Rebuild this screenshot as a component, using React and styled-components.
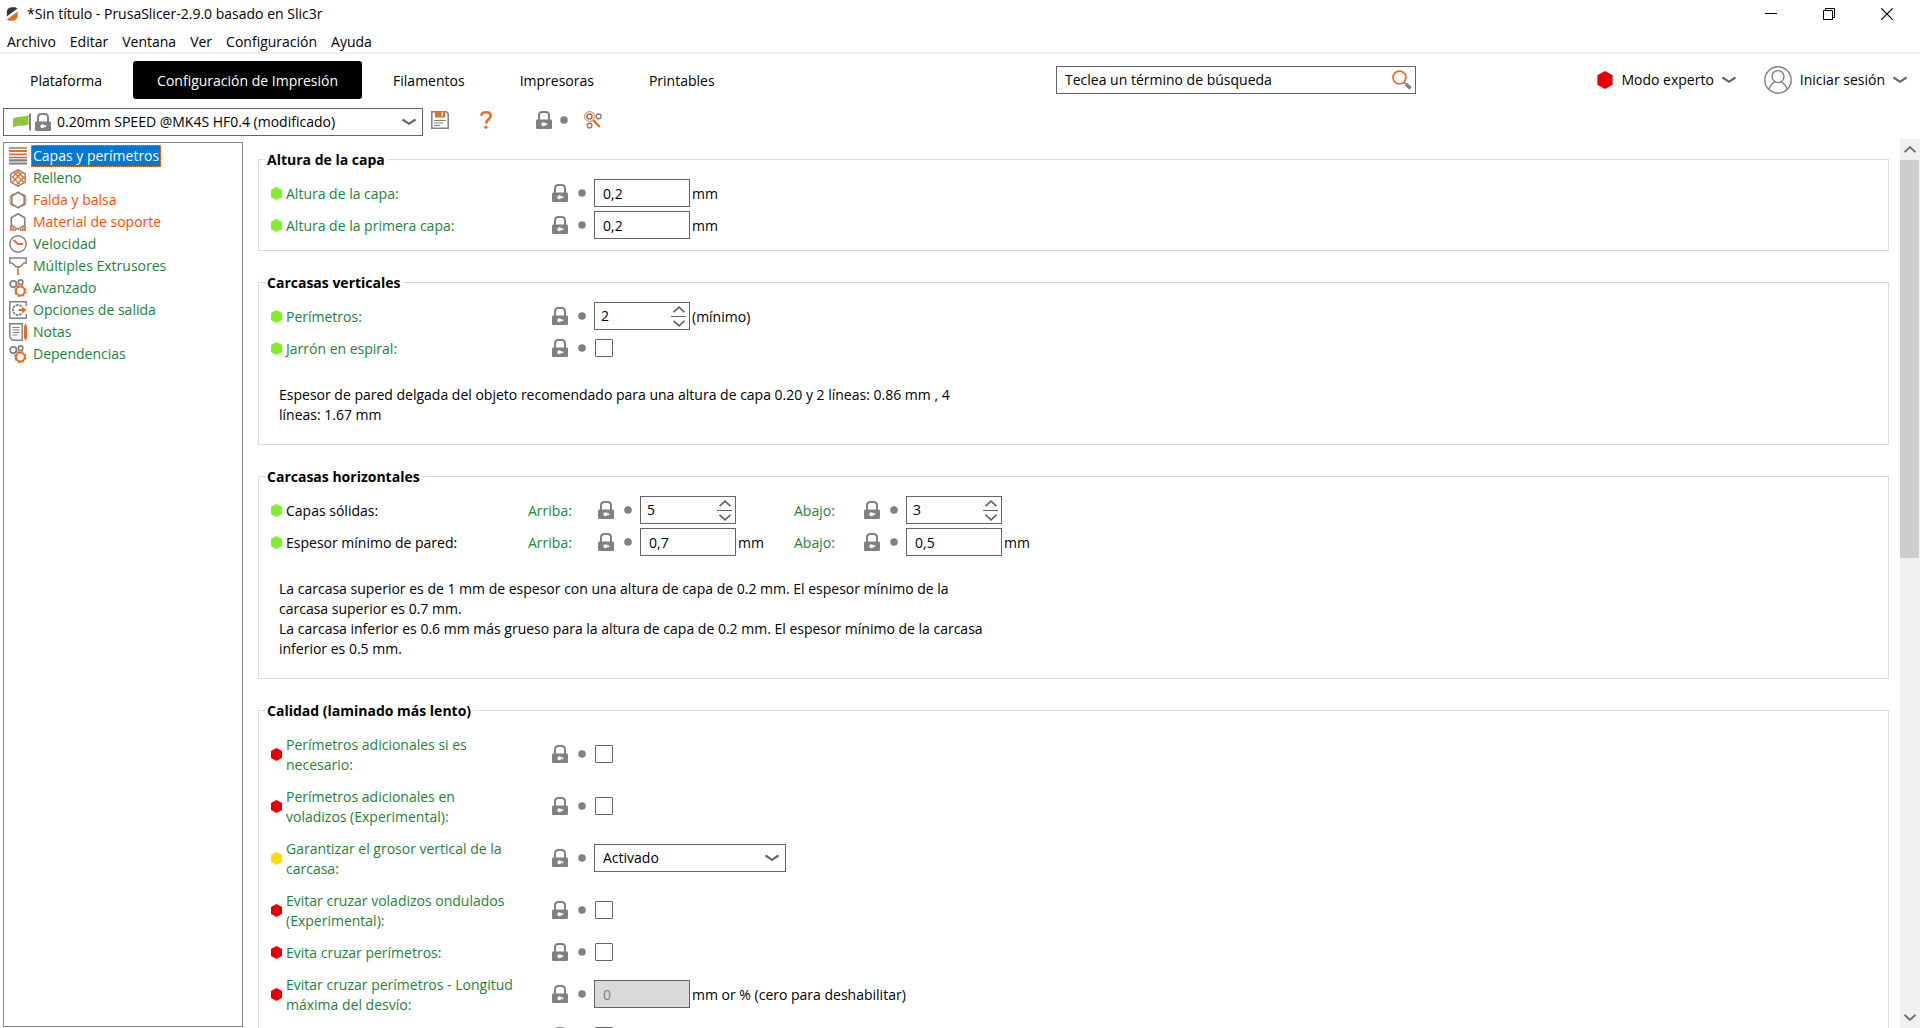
import React, { useId } from "react";
import styled, { createGlobalStyle, css } from "styled-components";

const c = {
  text: "#000000",
  green: "#1a8439",
  orange: "#fc4d01",
  accent: "#ed6b21",
  grey: "#808080",
  border: "#646464",
  group: "#dcdcdc",
  simple: "#7df028",
  advanced: "#ffdc00",
  expert: "#e70000",
};

const GlobalStyle = createGlobalStyle`
  *, *::before, *::after { box-sizing: border-box; }
  body {
    margin: 0;
    background: #ffffff;
    color: ${c.text};
    font: 14px/20px "Open Sans", "Noto Sans", sans-serif;
  }
  button, input, select { font: inherit; color: inherit; margin: 0; }
  svg { display: block; flex: none; }
`;

/* ---------- icons ---------- */

const Svg = ({ w, h, children, ...rest }) => (
  <svg width={w} height={h} viewBox={`0 0 ${w} ${h}`} fill="none" aria-hidden="true" {...rest}>
    {children}
  </svg>
);

const LockIcon = () => (
  <Svg w={16} h={18}>
    <path d="M3 9V4.5Q3 1 6.5 1h3Q13 1 13 4.5V9" stroke={c.grey} strokeWidth="2" />
    <rect y="8.5" width="16" height="9.5" rx="1.2" fill={c.grey} />
    <circle cx="7.4" cy="13.2" r="2" fill="#fff" />
    <path d="M8 13.2h3.2" stroke="#fff" strokeWidth="1.8" />
  </Svg>
);

const DotIcon = () => (
  <Svg w={8} h={8}>
    <circle cx="4" cy="4" r="3.8" fill={c.grey} />
  </Svg>
);

const HexIcon = ({ color, w = 11, h = 13 }) => (
  <svg width={w} height={h} viewBox="0 0 11 13" aria-hidden="true">
    <path d="M5.5 0 11 3v7l-5.5 3L0 10V3z" fill={color} />
  </svg>
);

const ChevronDown = ({ w = 14, h = 8 }) => (
  <svg width={w} height={h} viewBox="0 0 14 8" fill="none" aria-hidden="true">
    <path d="M.5 1.500 7 5.800l6.500-4.300" stroke={c.border} strokeWidth="2.200" />
  </svg>
);

const ArrowTip = ({ up }) => (
  <Svg w={12} h={7}>
    <path d={up ? "M.5 6.2 6 1.2l5.500 5" : "M.5.800l5.500 5 5.500-5"} stroke={c.border} strokeWidth="1.8" />
  </Svg>
);

const LogoIcon = () => (
  <Svg w={12} h={14}>
    <path d="M.8 9.500V5Q1.200.3 6 .3h3.500L11.500 1.500z" fill="#363636" />
    <path d="M11.600 4.500V9Q11 13.700 6.200 13.700H3L.8 12.500z" fill={c.accent} />
  </Svg>
);

const FlagIcon = () => (
  <Svg w={18} h={18}>
    <path d="M0 5.500Q4 3.600 8 3.800T15.500 2V11.500Q12 12.800 8 12.600T0 14.500z" fill="#8cc63f" />
    <path d="M17 .5v17" stroke={c.grey} strokeWidth="2" />
  </Svg>
);

const SaveIcon = () => (
  <Svg w={18} h={18}>
    <path d="M.8.800h14.400l2 2v14.400H.8z" stroke={c.grey} strokeWidth="1.500" />
    <path d="M4 0h10v6.500H4z" fill={c.accent} />
    <path d="M11.200 1.200v3.800" stroke="#fff" strokeWidth="1.500" />
    <path d="M3 9.500h12M3 12h9M3 14.500h6" stroke={c.grey} strokeWidth="1.200" />
  </Svg>
);

const HelpIcon = () => (
  <Svg w={12} h={18}>
    <path d="M1.300 4.800Q1.300 1.300 6 1.300T10.700 5c0 3-4.600 3.600-4.600 7.500" stroke={c.accent} strokeWidth="2.600" />
    <circle cx="6" cy="16.200" r="1.600" fill={c.accent} />
  </Svg>
);

const CompareIcon = () => (
  <Svg w={18} h={18}>
    <circle cx="5.500" cy="5.500" r="4.900" stroke={c.accent} strokeWidth="1" />
    <circle cx="5.500" cy="5.500" r="2.500" stroke={c.grey} strokeWidth="1.600" />
    <circle cx="14.600" cy="5.400" r="2.400" stroke={c.grey} strokeWidth="1.400" />
    <circle cx="5.500" cy="14.600" r="2.400" stroke={c.grey} strokeWidth="1.400" />
    <path d="m9.200 9.200 6.600 6.800" stroke={c.accent} strokeWidth="2.400" />
  </Svg>
);

const SearchIcon = () => (
  <Svg w={20} h={20}>
    <circle cx="7.500" cy="7.500" r="6.400" stroke={c.accent} strokeWidth="1.800" />
    <path d="m12.500 12.500 1.500 1.500" stroke={c.grey} strokeWidth="1.500" />
    <path d="m14 14 4.500 4.500" stroke={c.grey} strokeWidth="3.400" />
  </Svg>
);

const UserIcon = () => (
  <Svg w={28} h={28} stroke={c.grey} strokeWidth="1.400">
    <circle cx="14" cy="14" r="13.200" />
    <circle cx="14" cy="10.600" r="6" />
    <path d="M4.800 23.200Q7 17.500 11 15.800M23.200 23.200Q21 17.500 17 15.800" />
  </Svg>
);

const LayersIcon = () => (
  <Svg w={18} h={18}>
    <path d="M0 1h18M0 10.500h18" stroke={c.grey} strokeWidth="1.300" />
    <path d="M0 4h18M0 7.300h18" stroke={c.accent} strokeWidth="1.800" />
    <path d="M0 13.300h18M0 16.500h18" stroke={c.grey} strokeWidth="2.200" />
  </Svg>
);

const InfillIcon = () => (
  <Svg w={18} h={18}>
    <path d="M5 3.500 14.500 13M3 7.500l7.500 7.500M8.500 2.500 15.500 9.500M13 3.500 3.500 13M15.500 7.500 8 15.500M9.500 2 3 8.500" stroke={c.accent} strokeWidth="1.300" />
    <path d="M9 .8 16.200 5v8L9 17.200 1.800 13V5z" stroke={c.grey} strokeWidth="1.400" />
  </Svg>
);

const SkirtIcon = () => (
  <Svg w={18} h={18}>
    <path d="M5 2.800 1.500 5v8L5 15.200M13 2.800 16.500 5v8L13 15.200" stroke="#f3a67a" strokeWidth="2" />
    <path d="M9 1.200 15.200 5v8L9 16.800 2.800 13V5z" stroke={c.grey} strokeWidth="1.600" />
  </Svg>
);

const SupportIcon = () => (
  <Svg w={18} h={18}>
    <path d="M2 12.500V18M4.200 14.500V18M6.400 16v2M16 12.500V18M13.800 14.500V18M11.600 16v2" stroke={c.accent} strokeWidth="1.700" />
    <path d="M9 .8 15.700 4.800v7.600L9 16.200 2.300 12.400V4.800z" stroke={c.grey} strokeWidth="1.600" />
  </Svg>
);

const SpeedIcon = () => (
  <Svg w={18} h={18}>
    <circle cx="9" cy="9" r="8.200" stroke={c.grey} strokeWidth="1.400" />
    <path d="M4.500 5 9 9h5" stroke={c.accent} strokeWidth="1.800" />
  </Svg>
);

const ExtruderIcon = () => (
  <Svg w={18} h={18}>
    <path d="M.8 1h16.400v5H15L11 9.800H7L3 6H.8z" stroke={c.grey} strokeWidth="1.400" />
    <path d="M9 10v8" stroke={c.accent} strokeWidth="1.600" />
  </Svg>
);

const GearsIcon = () => (
  <Svg w={18} h={18}>
    <circle cx="4.300" cy="5" r="3.200" stroke={c.grey} strokeWidth="1.800" />
    <circle cx="11.600" cy="3.200" r="2.300" stroke={c.grey} strokeWidth="1.600" />
    <circle cx="11.300" cy="12" r="4.400" stroke={c.accent} strokeWidth="2" />
    <circle cx="11.300" cy="12" r="5.500" stroke={c.accent} strokeWidth="1.200" strokeDasharray="2.400 1.920" />
  </Svg>
);

const OutputIcon = () => (
  <Svg w={18} h={18}>
    <path d="M17.200 5V.8H.8v16.400h16.400V13" stroke={c.grey} strokeWidth="1.400" />
    <path d="M12.500 5.500A5 5 0 1 0 12.500 12.500" stroke={c.grey} strokeWidth="1.800" strokeDasharray="2.600 .8" />
    <path d="M9.500 9H14" stroke={c.accent} strokeWidth="2" />
    <path d="M13 5.500 17.500 9 13 12.500z" fill={c.accent} />
  </Svg>
);

const NotesIcon = () => (
  <Svg w={18} h={18}>
    <path d="M.8.800h12.400v16.400H3.500L.8 14.500z" stroke={c.grey} strokeWidth="1.400" />
    <path d="M3.500 4.500h7M3.500 7h7M3.500 9.500h7M3.500 12h4.500" stroke={c.grey} strokeWidth="1.200" />
    <path d="M15 3.500 16.500 0 18 3.500V15l-1.500 3L15 15z" fill={c.accent} />
  </Svg>
);

/* ---------- window frame ---------- */

const Window = styled.div`
  height: 100vh;
  display: flex;
  flex-direction: column;
  overflow: hidden;
`;

const TitleBar = styled.header`
  display: flex;
  align-items: center;
  gap: 9px;
  height: 28px;
  padding-left: 6px;
`;

const TitleText = styled.h1`
  margin: 0;
  flex: 1;
  font-size: 14px;
  font-weight: 400;
`;

const WindowButton = styled.button`
  display: grid;
  place-items: center;
  width: 58px;
  height: 28px;
  padding: 0;
  border: 0;
  background: none;
`;

const WindowButtons = styled.div`
  display: flex;
  padding-right: 4px;
`;

const MenuBar = styled.nav`
  display: flex;
  gap: 14px;
  height: 26px;
  padding: 4px 7px 0;
  border-bottom: 2px solid #f0f0f0;
`;

const MenuItem = styled.button`
  height: 20px;
  padding: 0;
  border: 0;
  background: none;
`;

const TopBar = styled.div`
  display: flex;
  align-items: center;
  padding: 7px 13px 0 6px;
`;

const Tabs = styled.div`
  display: flex;
  flex: 1;
  gap: 7px;
`;

const Tab = styled.button`
  height: 38px;
  padding: 1px 24px 0;
  border: 0;
  border-radius: 3px;
  white-space: nowrap;
  background: ${(p) => (p.$active ? "#000000" : "transparent")};
  color: ${(p) => (p.$active ? "#ffffff" : c.text)};
`;

const SearchBox = styled.label`
  display: flex;
  align-items: center;
  width: 360px;
  height: 28px;
  padding: 0 3px 0 8px;
  border: 1px solid ${c.border};
`;

const SearchInput = styled.input`
  flex: 1;
  min-width: 0;
  padding: 0;
  border: 0;
  outline: 0;
  background: none;
  &::placeholder {
    color: ${c.text};
    opacity: 1;
  }
`;

const AccountArea = styled.div`
  display: flex;
  justify-content: flex-end;
  gap: 28px;
  width: 491px;
`;

const MenuButton = styled.button`
  display: flex;
  align-items: center;
  gap: 8px;
  height: 28px;
  padding: 0;
  border: 0;
  background: none;
`;

/* ---------- toolbar ---------- */

const Toolbar = styled.div`
  display: flex;
  align-items: flex-end;
  height: 40px;
  padding: 0 0 3px 3px;
`;

const selectReset = css`
  appearance: none;
  border: 0;
  outline: 0;
  background: none;
  color: ${c.text};
`;

const PresetBox = styled.div`
  display: flex;
  align-items: center;
  gap: 4px;
  width: 420px;
  height: 28px;
  padding: 0 6px 0 9px;
  border: 1px solid ${c.border};
`;

const PresetSelect = styled.select`
  ${selectReset}
  flex: 1;
  min-width: 0;
  padding: 0 2px;
`;

const ToolGroup = styled.div`
  display: flex;
  align-items: center;
  height: 32px;
  padding-left: ${(p) => p.$before}px;
  gap: ${(p) => p.$gap}px;
`;

const IconButton = styled.button`
  display: grid;
  place-items: center;
  padding: 0;
  border: 0;
  background: none;
`;

/* ---------- main area ---------- */

const Main = styled.main`
  flex: 1;
  min-height: 0;
  display: flex;
`;

const Tree = styled.ul`
  width: 240px;
  margin: 3px 15px 1px 3px;
  padding: 2px 5px;
  list-style: none;
  border: 1px solid #828790;
`;

const TreeItem = styled.button`
  display: flex;
  align-items: center;
  gap: 4px;
  height: 22px;
  padding: 0;
  border: 0;
  background: none;
  color: ${(p) => (p.$modified ? c.orange : c.green)};
`;

const TreeLabel = styled.span`
  padding: 0 1px;
  border: 1px solid transparent;
  line-height: 20px;
  ${(p) =>
    p.$selected &&
    css`
      background: #0078d7;
      border: 1px dotted #ff8728;
      color: #ffffff;
    `}
`;

const Pane = styled.div`
  flex: 1;
  min-width: 0;
  display: flex;
  flex-direction: column;
  gap: 21px;
  padding: 10px 11px 0 0;
  overflow: auto;
  scrollbar-width: none;
`;

const Group = styled.fieldset`
  flex: none;
  min-width: 0;
  margin: 0;
  padding: 9px 12px 11px;
  border: 1px solid ${c.group};
`;

const GroupTitle = styled.legend`
  margin-left: -6px;
  padding: 0 2px;
  font-weight: 700;
  line-height: 21px;
`;

const Rows = styled.div`
  display: flex;
  flex-direction: column;
  gap: 4px;
`;

const Row = styled.div`
  display: flex;
  align-items: center;
  min-height: ${(p) => (p.$tall ? 48 : 28)}px;
`;

const OptionLabel = styled.label`
  display: flex;
  align-items: center;
  gap: 4px;
  width: ${(p) => (p.$short ? 257 : 281)}px;
  padding-right: ${(p) => (p.$short ? 0 : 36)}px;
  color: ${(p) => (p.$plain ? c.text : c.green)};
`;

const LabelText = styled.span`
  padding-top: 2px;
`;

const Cell = styled.div`
  display: flex;
  align-items: center;
  width: 266px;
`;

const CellLabel = styled.label`
  width: 70px;
  padding-top: 2px;
  color: ${c.green};
`;

const Marks = styled.span`
  display: flex;
  align-items: center;
  gap: 10px;
  margin-right: 8px;
`;

const TextInput = styled.input`
  width: 96px;
  height: 28px;
  padding: 0 8px;
  border: 1px solid ${c.border};
  border-radius: 0;
  outline: 0;
  background: #ffffff;
  &:disabled {
    background: #d9d9d9;
    color: ${c.grey};
  }
`;

const SpinBox = styled.span`
  display: flex;
  width: 96px;
  height: 28px;
  padding: 0 3px 0 6px;
  border: 1px solid ${c.border};
`;

const SpinInput = styled.input`
  flex: 1;
  min-width: 0;
  padding: 0;
  border: 0;
  outline: 0;
  appearance: textfield;
  &::-webkit-inner-spin-button {
    display: none;
  }
`;

const SpinButtons = styled.span`
  display: flex;
  flex-direction: column;
  justify-content: center;
`;

const SpinButton = styled.button`
  display: grid;
  place-items: center;
  width: 15px;
  height: 13px;
  padding: 0;
  border: 0;
  background: none;
  & + & {
    border-top: 1px solid ${c.border};
  }
`;

const Check = styled.input`
  appearance: none;
  width: 18px;
  height: 18px;
  margin-left: 1px;
  border: 1px solid ${c.border};
  border-radius: 1px;
  background: #ffffff;
  &:checked {
    background: ${c.accent};
  }
`;

const SelectBox = styled.span`
  display: flex;
  align-items: center;
  width: 192px;
  height: 28px;
  padding: 0 6px 0 8px;
  border: 1px solid ${c.border};
`;

const SelectInput = styled.select`
  ${selectReset}
  flex: 1;
  min-width: 0;
  padding: 0;
`;

const Suffix = styled.span`
  padding: 2px 0 0 2px;
`;

const Note = styled.p`
  max-width: 716px;
  margin: 23px 0 8px;
  padding-left: 8px;
`;

const ScrollBar = styled.div`
  display: flex;
  flex-direction: column;
  width: 20px;
  background: #f0f0f0;
`;

const ScrollButton = styled.button`
  display: grid;
  place-items: center;
  width: 19px;
  height: 21px;
  padding: 0;
  border: 0;
  background: none;
`;

const ScrollTrack = styled.div`
  flex: 1;
`;

const ScrollThumb = styled.div`
  width: 19px;
  height: 47%;
  background: #cdcdcd;
`;

/* ---------- composed parts ---------- */

const OptionMarks = () => (
  <Marks>
    <IconButton type="button" aria-label="Valor del sistema"><LockIcon /></IconButton>
    <IconButton type="button" aria-label="Valor sin cambios"><DotIcon /></IconButton>
  </Marks>
);

const Control = ({ id, kind, value, disabled, options }) => {
  if (kind === "spin")
    return (
      <SpinBox>
        <SpinInput id={id} type="number" defaultValue={value} />
        <SpinButtons>
          <SpinButton type="button" aria-label="Aumentar"><ArrowTip up /></SpinButton>
          <SpinButton type="button" aria-label="Disminuir"><ArrowTip /></SpinButton>
        </SpinButtons>
      </SpinBox>
    );
  if (kind === "check") return <Check id={id} type="checkbox" />;
  if (kind === "select")
    return (
      <SelectBox>
        <SelectInput id={id}>
          {options.map((o) => <option key={o}>{o}</option>)}
        </SelectInput>
        <ChevronDown />
      </SelectBox>
    );
  return <TextInput id={id} type="text" defaultValue={value} disabled={disabled} />;
};

const Option = ({ label, mode = "simple", tall, suffix, ...control }) => {
  const id = useId();
  return (
    <Row $tall={tall}>
      <OptionLabel htmlFor={id}>
        <HexIcon color={c[mode]} />
        <LabelText>{label}</LabelText>
      </OptionLabel>
      <OptionMarks />
      <Control id={id} {...control} />
      {suffix && <Suffix>{suffix}</Suffix>}
    </Row>
  );
};

const SubOption = ({ label, suffix, ...control }) => {
  const id = useId();
  return (
    <Cell>
      <CellLabel htmlFor={id}>{label}</CellLabel>
      <OptionMarks />
      <Control id={id} {...control} />
      {suffix && <Suffix>{suffix}</Suffix>}
    </Cell>
  );
};

const PairOption = ({ label, items }) => (
  <Row>
    <OptionLabel as="span" $short $plain>
      <HexIcon color={c.simple} />
      <LabelText>{label}</LabelText>
    </OptionLabel>
    {items.map((item) => <SubOption key={item.label} {...item} />)}
  </Row>
);

const menus = ["Archivo", "Editar", "Ventana", "Ver", "Configuración", "Ayuda"];
const tabs = ["Plataforma", "Configuración de Impresión", "Filamentos", "Impresoras", "Printables"];
const pages = [
  ["Capas y perímetros", LayersIcon],
  ["Relleno", InfillIcon],
  ["Falda y balsa", SkirtIcon, true],
  ["Material de soporte", SupportIcon, true],
  ["Velocidad", SpeedIcon],
  ["Múltiples Extrusores", ExtruderIcon],
  ["Avanzado", GearsIcon],
  ["Opciones de salida", OutputIcon],
  ["Notas", NotesIcon],
  ["Dependencias", GearsIcon],
];

export default function App() {
  return (
    <Window>
      <GlobalStyle />
      <TitleBar>
        <LogoIcon />
        <TitleText>*Sin título - PrusaSlicer-2.9.0 basado en Slic3r</TitleText>
        <WindowButtons>
          <WindowButton type="button" aria-label="Minimizar">
            <Svg w={12} h={12}><path d="M0 5.500h12" stroke="#000" /></Svg>
          </WindowButton>
          <WindowButton type="button" aria-label="Restaurar">
            <Svg w={12} h={12}><path d="M.5 2.500h9v9h-9zM2.500 2.500v-2h9v9h-2" stroke="#000" /></Svg>
          </WindowButton>
          <WindowButton type="button" aria-label="Cerrar">
            <Svg w={12} h={12}><path d="m.3.300 11.400 11.400M11.700.300.300 11.700" stroke="#000" strokeWidth="1.200" /></Svg>
          </WindowButton>
        </WindowButtons>
      </TitleBar>
      <MenuBar>
        {menus.map((m) => <MenuItem key={m} type="button">{m}</MenuItem>)}
      </MenuBar>

      <TopBar>
        <Tabs>
          {tabs.map((t, i) => <Tab key={t} type="button" $active={i === 1}>{t}</Tab>)}
        </Tabs>
        <SearchBox>
          <SearchInput type="text" aria-label="Buscar" placeholder="Teclea un término de búsqueda" />
          <SearchIcon />
        </SearchBox>
        <AccountArea>
          <MenuButton type="button">
            <HexIcon color={c.expert} w={16} h={18} />
            Modo experto
            <ChevronDown />
          </MenuButton>
          <MenuButton type="button">
            <UserIcon />
            Iniciar sesión
            <ChevronDown />
          </MenuButton>
        </AccountArea>
      </TopBar>

      <Toolbar>
        <PresetBox>
          <FlagIcon />
          <LockIcon />
          <PresetSelect aria-label="Perfil de impresión">
            <option>0.20mm SPEED @MK4S HF0.4 (modificado)</option>
          </PresetSelect>
          <ChevronDown />
        </PresetBox>
        <ToolGroup $before={8} $gap={31}>
          <IconButton type="button" aria-label="Guardar"><SaveIcon /></IconButton>
          <IconButton type="button" aria-label="Ayuda"><HelpIcon /></IconButton>
        </ToolGroup>
        <ToolGroup $before={44} $gap={8}>
          <IconButton type="button" aria-label="Valores del sistema"><LockIcon /></IconButton>
          <IconButton type="button" aria-label="Sin cambios"><DotIcon /></IconButton>
        </ToolGroup>
        <ToolGroup $before={16} $gap={0}>
          <IconButton type="button" aria-label="Comparar perfiles"><CompareIcon /></IconButton>
        </ToolGroup>
      </Toolbar>

      <Main>
        <Tree>
          {pages.map(([name, Icon, modified], i) => (
            <li key={name}>
              <TreeItem type="button" $modified={modified}>
                <Icon />
                <TreeLabel $selected={i === 0}>{name}</TreeLabel>
              </TreeItem>
            </li>
          ))}
        </Tree>

        <Pane>
          <Group>
            <GroupTitle>Altura de la capa</GroupTitle>
            <Rows>
              <Option label="Altura de la capa:" value="0,2" suffix="mm" />
              <Option label="Altura de la primera capa:" value="0,2" suffix="mm" />
            </Rows>
          </Group>

          <Group>
            <GroupTitle>Carcasas verticales</GroupTitle>
            <Rows>
              <Option label="Perímetros:" kind="spin" value="2" suffix="(mínimo)" />
              <Option label="Jarrón en espiral:" kind="check" />
            </Rows>
            <Note>
              Espesor de pared delgada del objeto recomendado para una altura de capa 0.20 y 2 líneas: 0.86 mm , 4
              líneas: 1.67 mm
            </Note>
          </Group>

          <Group>
            <GroupTitle>Carcasas horizontales</GroupTitle>
            <Rows>
              <PairOption
                label="Capas sólidas:"
                items={[
                  { label: "Arriba:", kind: "spin", value: "5" },
                  { label: "Abajo:", kind: "spin", value: "3" },
                ]}
              />
              <PairOption
                label="Espesor mínimo de pared:"
                items={[
                  { label: "Arriba:", value: "0,7", suffix: "mm" },
                  { label: "Abajo:", value: "0,5", suffix: "mm" },
                ]}
              />
            </Rows>
            <Note>
              La carcasa superior es de 1 mm de espesor con una altura de capa de 0.2 mm. El espesor mínimo de la
              carcasa superior es 0.7 mm.
              <br />
              La carcasa inferior es 0.6 mm más grueso para la altura de capa de 0.2 mm. El espesor mínimo de la
              carcasa inferior es 0.5 mm.
            </Note>
          </Group>

          <Group>
            <GroupTitle>Calidad (laminado más lento)</GroupTitle>
            <Rows>
              <Option tall mode="expert" label="Perímetros adicionales si es necesario:" kind="check" />
              <Option tall mode="expert" label="Perímetros adicionales en voladizos (Experimental):" kind="check" />
              <Option
                tall
                mode="advanced"
                label="Garantizar el grosor vertical de la carcasa:"
                kind="select"
                options={["Activado"]}
              />
              <Option tall mode="expert" label="Evitar cruzar voladizos ondulados (Experimental):" kind="check" />
              <Option mode="expert" label="Evita cruzar perímetros:" kind="check" />
              <Option
                tall
                mode="expert"
                label="Evitar cruzar perímetros - Longitud máxima del desvío:"
                value="0"
                disabled
                suffix="mm or % (cero para deshabilitar)"
              />
              <Option mode="advanced" kind="check" />
            </Rows>
          </Group>
        </Pane>

        <ScrollBar>
          <ScrollButton type="button" aria-label="Subir"><ArrowTip up /></ScrollButton>
          <ScrollTrack>
            <ScrollThumb />
          </ScrollTrack>
          <ScrollButton type="button" aria-label="Bajar"><ArrowTip /></ScrollButton>
        </ScrollBar>
      </Main>
    </Window>
  );
}
